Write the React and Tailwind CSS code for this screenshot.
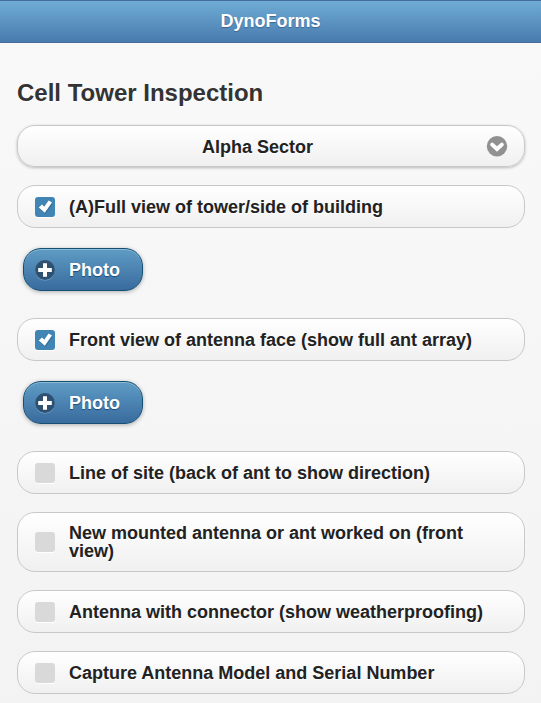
import React, { useState } from 'react';

const SECTORS = ['Alpha Sector', 'Beta Sector', 'Gamma Sector'];

const initialItems = [
    { id: 'full-view', label: '(A)Full view of tower/side of building', checked: true },
    { id: 'front-view', label: 'Front view of antenna face (show full ant array)', checked: true },
    { id: 'line-of-site', label: 'Line of site (back of ant to show direction)', checked: false },
    { id: 'new-mounted', label: 'New mounted antenna or ant worked on (front view)', checked: false },
    { id: 'connector', label: 'Antenna with connector (show weatherproofing)', checked: false },
    { id: 'model-serial', label: 'Capture Antenna Model and Serial Number', checked: false },
];

const ArrowIcon = () => (
    <svg viewBox="0 0 20 20" className="w-5 h-5 overflow-visible" aria-hidden="true">
        <circle cx="10" cy="10.2" r="10.2" fill="#919191" />
        <path d="M5.2 8.6 L10 13 L14.8 8.6" fill="none" stroke="#fff" strokeWidth="4" strokeLinecap="round" />
    </svg>
);

const PlusIcon = () => (
    <svg viewBox="0 0 20 20" className="w-5 h-5 shrink-0 overflow-visible" aria-hidden="true">
        <circle cx="10" cy="10.8" r="9.8" fill="#8fbbdb" opacity=".7" />
        <circle cx="10" cy="10" r="9.9" fill="#2f5171" />
        <path d="M10 3.2 V16.8 M3.2 10 H16.8" stroke="#fff" strokeWidth="4" />
    </svg>
);

const CheckIcon = () => (
    <svg viewBox="0 0 20 20" className="absolute inset-0 w-5 h-5 pointer-events-none" aria-hidden="true">
        <path d="M3.8 11 L7 8 L9.3 10.2 L13.8 3.8 L17.3 6.1 L10 16.2 Z" fill="#2c6590" transform="translate(.5 .8)" opacity=".6" />
        <path d="M3.8 10.6 L7 7.6 L9.3 9.8 L13.6 3.4 L17 5.6 L9.8 15.8 Z" fill="#fff" />
    </svg>
);

const CheckItem = ({ item, onToggle }) => (
    <label
        htmlFor={item.id}
        className="flex items-center gap-[14px] min-h-[43px] pl-[17px] pr-8 py-[11px] rounded-[18px] border border-[#c8c8c8] bg-linear-to-b from-white to-[#f0f0f0] cursor-pointer"
    >
        <span className="relative w-5 h-5 -my-px shrink-0">
            <input
                id={item.id}
                type="checkbox"
                checked={item.checked}
                onChange={() => onToggle(item.id)}
                className="block appearance-none w-5 h-5 rounded-[3px] bg-[#d9d9d9] shadow-[0_1px_0_#fff] checked:bg-[#4185b5] cursor-pointer"
            />
            {item.checked && <CheckIcon />}
        </span>
        <span className="leading-[18px] text-[#222] [text-shadow:0_1px_0_#fff]">{item.label}</span>
    </label>
);

const PhotoButton = () => (
    <button
        type="button"
        className="flex items-center gap-[14px] ml-[6px] mt-5 mb-[9px] pl-[11px] pr-[22px] pt-3 pb-[11px] rounded-[18px] border border-[#145072] bg-linear-to-b from-[#5f9cc5] to-[#396b9e] shadow-[inset_0_1px_0_rgba(255,255,255,0.3),0_1px_4px_rgba(0,0,0,0.3)] cursor-pointer"
    >
        <span className="-my-px"><PlusIcon /></span>
        <span className="leading-[18px] text-white [text-shadow:0_1px_1px_#194b7e]">Photo</span>
    </button>
);

const App = () => {
    const [items, setItems] = useState(initialItems);
    const [sector, setSector] = useState(SECTORS[0]);

    const toggle = (id) => {
        setItems(items.map((item) => (item.id === id ? { ...item, checked: !item.checked } : item)));
    };

    return (
        <div className="min-h-screen bg-linear-to-b from-[#f9f9f9] to-[#f3f3f3] font-['Liberation_Sans',Arial,sans-serif] text-[18px] font-bold">
            {/* Header */}
            <header className="border-y border-[#456f9a] bg-linear-to-b from-[#6facd5] to-[#497bae] py-[10px]">
                <h1 className="text-center text-[18px] leading-[21px] text-white [text-shadow:0_1px_1px_#3e6790]">DynoForms</h1>
            </header>

            <main className="pl-[17px] pr-4 pt-9 pb-2">
                <h2 className="text-2xl leading-7 text-[#333] [text-shadow:0_1px_0_#fff]">Cell Tower Inspection</h2>

                {/* Sector */}
                <div className="relative mt-[18px]">
                    <select
                        aria-label="Sector"
                        value={sector}
                        onChange={(e) => setSector(e.target.value)}
                        className="block w-full appearance-none pl-4 pr-[43px] pt-[11px] pb-[9px] rounded-[18px] border border-[#c8c8c8] bg-linear-to-b from-white to-[#f0f0f0] shadow-[0_1px_3px_rgba(0,0,0,0.25)] leading-5 text-center text-[#222] [text-align-last:center] [text-shadow:0_1px_0_#fff] cursor-pointer"
                    >
                        {SECTORS.map((name) => (
                            <option key={name}>{name}</option>
                        ))}
                    </select>
                    <span className="absolute right-[18px] inset-y-0 flex items-center pointer-events-none">
                        <ArrowIcon />
                    </span>
                </div>

                {/* Checklist */}
                <ul className="mt-[18px] flex flex-col gap-[18px]">
                    {items.map((item) => (
                        <li key={item.id}>
                            <CheckItem item={item} onToggle={toggle} />
                            {item.checked && <PhotoButton />}
                        </li>
                    ))}
                </ul>
            </main>
        </div>
    );
};

export default App;
